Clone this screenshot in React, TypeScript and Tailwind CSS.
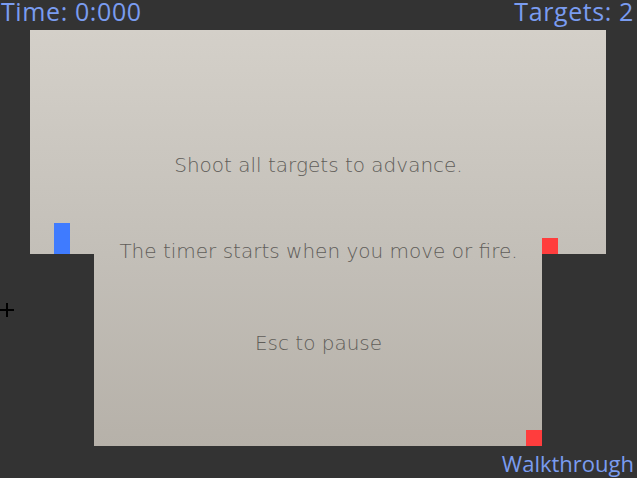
import React from "react";

const hud = "text-[25px] tracking-[0.6px] leading-[23px] text-[#7a9cf0]";
const hudFont = { fontFamily: "'Open Sans', Lato, sans-serif" };
const msgFont = { fontFamily: "'DejaVu Sans', 'Open Sans', sans-serif" };

export default function App() {
  return (
    <div className="relative w-[637px] h-[478px] overflow-hidden bg-[#333333] select-none" style={hudFont}>
      {/* HUD */}
      <div className="flex h-[30px] items-start justify-between pl-[1px] pr-[3px]">
        <span className={hud}>Time: 0:000</span>
        <span className={hud}>Targets: 2</span>
      </div>

      {/* level */}
      <div className="ml-[30px] h-[224px] w-[576px] bg-gradient-to-b from-[#d4d0c9] to-[#c3bfb8]" />
      <div className="ml-[94px] h-[192px] w-[448px] bg-gradient-to-b from-[#c3bfb8] to-[#b6b1a9]" />

      <div className="flex justify-end pr-[3px] pt-[3px]">
        <span className="text-[22px] leading-[28px] text-[#7a9cf0]">Walkthrough</span>
      </div>

      {/* instructions */}
      <div
        className="absolute inset-x-0 top-[152px] flex flex-col items-center text-[20px] font-extralight leading-[26px] text-[#605d59]"
        style={msgFont}
      >
        <p>Shoot all targets to advance.</p>
        <p className="mt-[60px]">The timer starts when you move or fire.</p>
        <p className="mt-[66px]">Esc to pause</p>
      </div>

      {/* player and targets */}
      <div className="absolute left-[54px] top-[223px] h-[31px] w-[16px] bg-[#3f7bff]" />
      <div className="absolute left-[542px] top-[238px] h-[16px] w-[16px] bg-[#ff3d3d]" />
      <div className="absolute left-[526px] top-[430px] h-[16px] w-[16px] bg-[#ff3d3d]" />

      {/* crosshair */}
      <svg className="absolute left-0 top-[303px]" width="14" height="14" viewBox="0 0 14 14">
        <path d="M7 0V14M0 7H14" stroke="#000" strokeWidth="2" />
      </svg>
    </div>
  );
}
